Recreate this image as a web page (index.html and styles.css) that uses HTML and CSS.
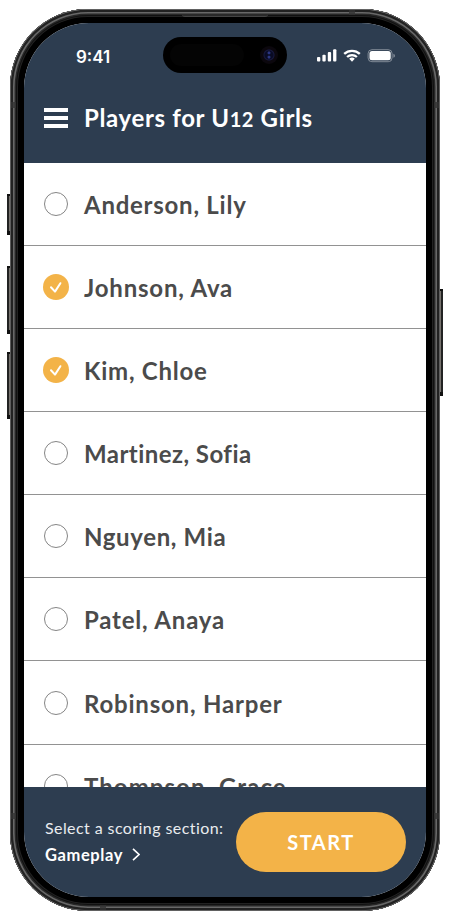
FILE: index.html
```
<!DOCTYPE html>
<html lang="en">
<head>
<meta charset="utf-8">
<title>Players for U12 Girls</title>
<link rel="stylesheet" href="styles.css">
</head>
<body>
<div class="phone">
  <i class="side action"></i><i class="side up"></i><i class="side down"></i><i class="side power"></i>
  <div class="shell">
    <i class="seam s1"></i><i class="seam s2"></i><i class="seam s3"></i><i class="seam s4"></i><i class="seam s5"></i><i class="seam s6"></i>
    <i class="speaker"></i>
    <div class="screen">
      <header class="top">
        <div class="status">
          <span class="time">9:41</span>
          <svg class="signals" width="80" height="14" viewBox="0 0 80 14" fill="#fff">
            <rect x="0" y="8" width="3.3" height="4.6" rx="1"/><rect x="5.4" y="5.7" width="3.3" height="6.9" rx="1"/><rect x="10.8" y="3" width="3.3" height="9.6" rx="1"/><rect x="16.1" y="0.2" width="3.3" height="12.4" rx="1"/>
            <g fill="none" stroke="#fff" stroke-width="2.3"><path d="M27.2 4.9A11.3 11.3 0 0 1 42.8 4.9"/><path d="M30.1 8A7.1 7.1 0 0 1 39.9 8"/></g>
            <path d="M32.2 9.8A4 4 0 0 1 37.8 9.8L35 12.7Z"/>
            <rect x="51.1" y=".7" width="24" height="12" rx="3.8" fill="none" stroke="#fff" stroke-opacity=".4"/>
            <rect x="52.5" y="2.1" width="21.2" height="9.2" rx="2.5"/>
            <path d="M76.4 4.7Q78 5.2 78 6.7T76.4 8.7Z" opacity=".4"/>
          </svg>
        </div>
        <div class="titlebar">
          <svg width="24" height="20" viewBox="0 0 24 20" fill="#fff"><path d="M0 0H24V4H0ZM0 8H24V12H0ZM0 16H24V20H0Z"/></svg>
          <h1>Players for U<span class="digits">12</span> Girls</h1>
        </div>
      </header>
      <main class="list">
        <div class="row"><span class="radio"></span><span class="name n1">Anderson, Lily</span></div>
        <div class="row"><span class="radio on"><svg width="26" height="26" viewBox="0 0 26 26"><path d="M8 13.3L12 17.6L17.4 9.2"/></svg></span><span class="name n2">Johnson, Ava</span></div>
        <div class="row"><span class="radio on"><svg width="26" height="26" viewBox="0 0 26 26"><path d="M8 13.3L12 17.6L17.4 9.2"/></svg></span><span class="name n3">Kim, Chloe</span></div>
        <div class="row"><span class="radio"></span><span class="name n4">Martinez, Sofia</span></div>
        <div class="row"><span class="radio"></span><span class="name n5">Nguyen, Mia</span></div>
        <div class="row"><span class="radio"></span><span class="name n6">Patel, Anaya</span></div>
        <div class="row"><span class="radio"></span><span class="name n7">Robinson, Harper</span></div>
        <div class="row"><span class="radio"></span><span class="name n8">Thompson, Grace</span></div>
      </main>
      <footer class="bottom">
        <div class="section">
          <div class="hint">Select a scoring section:</div>
          <div class="choice"><span>Gameplay</span><svg width="8" height="13" viewBox="0 0 8 13"><path d="M1 .8L7 6.5L1 12.2" fill="none" stroke="#fff" stroke-width="1.6"/></svg></div>
        </div>
        <button class="start">START</button>
      </footer>
    </div>
    <div class="island"><i class="sensor"></i><i class="lens"></i></div>
  </div>
</div>
</body>
</html>
```
FILE: styles.css
```
* { box-sizing: border-box; }
body { margin: 0; width: 450px; height: 920px; overflow: hidden; background: #fff; font-family: Lato, "Open Sans", sans-serif; }
.phone { position: relative; width: 430px; height: 902px; margin: 9px 0 0 10px; }
.shell {
  position: relative; width: 430px; height: 902px; padding: 14px; border-radius: 78px; background: #000;
  box-shadow: inset 0 0 0 .7px #777, inset 0 0 0 3px #222, inset 0 0 0 4.6px #686868, inset 0 0 0 6px #272727, inset 0 0 0 7px #111, inset 0 0 0 8px #222;
}
.screen { width: 402px; height: 874px; border-radius: 65px; overflow: hidden; background: #fff; display: flex; flex-direction: column; }
.side { position: absolute; width: 4px; background: linear-gradient(90deg, #222 0 45%, #77736e 45% 80%, #111 80%); border-top: 2px solid #111; border-bottom: 4px solid #111; }
.action { left: -3px; top: 185px; height: 41px; }
.up { left: -3px; top: 257px; height: 68px; }
.down { left: -3px; top: 343px; height: 67px; }
.power { right: -3px; top: 280px; height: 107px; transform: scaleX(-1); }
.seam { position: absolute; background: #333; opacity: .8; }
.s1, .s2, .s3, .s4 { width: 5px; height: 6px; }
.s1 { left: 1px; top: 93px; } .s2 { right: 1px; top: 93px; }
.s3 { left: 1px; top: 804px; } .s4 { right: 1px; top: 804px; }
.s5, .s6 { width: 6px; height: 5px; }
.s5 { right: 85px; top: 1px; } .s6 { left: 90px; bottom: 1px; }
.speaker { position: absolute; left: 172px; top: 5px; width: 86px; height: 3px; background: #292929; border-bottom: 1px solid #444; border-radius: 0 0 3px 3px; }
.top { height: 140px; flex: none; background: #2d3d50; color: #fff; }
.status { height: 65px; padding: 2px 29px 0 52px; display: flex; justify-content: space-between; align-items: center; }
.time { font: 600 17px/20px Inter, sans-serif; }
.signals { margin-bottom: 1px; }
.island { position: absolute; left: 153px; top: 28px; width: 124px; height: 36px; border-radius: 18px; background: #000; }
.sensor { position: absolute; left: 7px; top: 7px; width: 74px; height: 22px; border-radius: 11px; background: #040404; }
.lens { position: absolute; right: 9px; top: 9px; width: 18px; height: 18px; border-radius: 50%; background: radial-gradient(circle at 50% 38%, #2b3684 0 .8px, transparent 2px), radial-gradient(circle at 50% 62%, #2b3684 0 .8px, transparent 2px), radial-gradient(circle, #090b24 0 4px, #17183f 5px, #0b070d 6px); }
.titlebar { display: flex; align-items: center; gap: 16px; padding-left: 20px; height: 60px; }
h1 { margin: 0; font-size: 24px; line-height: 30px; font-weight: 700; white-space: nowrap; letter-spacing: .65px; }
.digits { font-size: 20px; }
.list { flex: 1; overflow: hidden; }
.row { height: 83.08px; border-bottom: 1px solid #929292; display: flex; align-items: center; gap: 16px; padding-left: 20px; }
.radio { width: 24px; height: 24px; border: 1px solid #858585; border-radius: 50%; flex: none; }
.radio.on { width: 26px; height: 26px; margin: 0 -1px; border: 0; background: #f3b348; }
.radio svg { display: block; }
.radio path { fill: none; stroke: #fff; stroke-width: 2; stroke-linecap: round; stroke-linejoin: round; }
.name { font-size: 24px; line-height: 30px; font-weight: 700; color: #4b4b4b; white-space: nowrap; padding-top: 2px; }
.n1, .n3 { letter-spacing: .75px; }
.n2, .n6, .n7 { letter-spacing: .8px; }
.n4 { letter-spacing: .45px; }
.n5 { letter-spacing: .65px; }
.n8 { letter-spacing: 1.05px; }
.bottom { height: 110px; flex: none; background: #2d3d50; color: #fff; display: flex; justify-content: space-between; align-items: center; padding: 0 20px; }
.section { display: flex; flex-direction: column; gap: 3px; padding: 0 0 2px 1px; width: 195px; margin-right: -10px; }
.hint { font-size: 16px; line-height: 24px; white-space: nowrap; color: #e9ecef; letter-spacing: .42px; }
.choice { display: flex; align-items: center; gap: 9px; font-size: 16.5px; line-height: 24px; font-weight: 700; letter-spacing: .6px; }
.start { width: 170px; height: 60px; border: 0; border-radius: 30px; background: #f3b348; color: #fff; font: 700 20px Lato, sans-serif; letter-spacing: 1.5px; }
```
